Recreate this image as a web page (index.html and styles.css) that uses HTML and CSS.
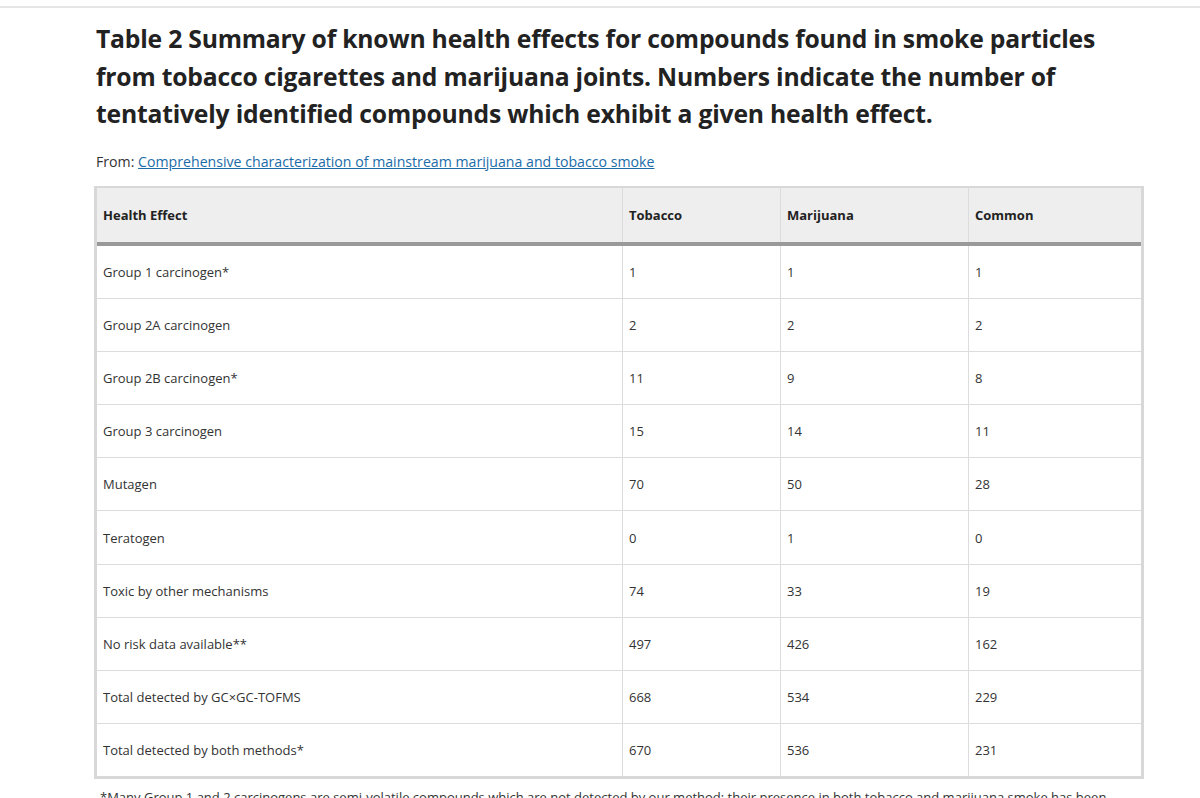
FILE: index.html
```html
<!DOCTYPE html>
<html lang="en">
<head>
<meta charset="utf-8">
<title>Table 2</title>
<link rel="stylesheet" href="styles.css">
</head>
<body>
<div class="topbar"></div>
<main class="content">
  <h1 class="title">Table 2 Summary of known health effects for compounds found in smoke particles from tobacco cigarettes and marijuana joints. Numbers indicate the number of tentatively identified compounds which exhibit a given health effect.</h1>
  <p class="from">From: <a href="#" class="src">Comprehensive characterization of mainstream marijuana and tobacco smoke</a></p>
  <div class="table-wrap">
    <table class="data">
      <thead>
        <tr><th class="c1">Health Effect</th><th class="c2">Tobacco</th><th class="c3">Marijuana</th><th class="c4">Common</th></tr>
      </thead>
      <tbody>
        <tr><td>Group 1 carcinogen*</td><td>1</td><td>1</td><td>1</td></tr>
        <tr><td>Group 2A carcinogen</td><td>2</td><td>2</td><td>2</td></tr>
        <tr><td>Group 2B carcinogen*</td><td>11</td><td>9</td><td>8</td></tr>
        <tr><td>Group 3 carcinogen</td><td>15</td><td>14</td><td>11</td></tr>
        <tr><td>Mutagen</td><td>70</td><td>50</td><td>28</td></tr>
        <tr><td>Teratogen</td><td>0</td><td>1</td><td>0</td></tr>
        <tr><td>Toxic by other mechanisms</td><td>74</td><td>33</td><td>19</td></tr>
        <tr><td>No risk data available**</td><td>497</td><td>426</td><td>162</td></tr>
        <tr><td>Total detected by GC×GC-TOFMS</td><td>668</td><td>534</td><td>229</td></tr>
        <tr><td>Total detected by both methods*</td><td>670</td><td>536</td><td>231</td></tr>
      </tbody>
    </table>
  </div>
  <p class="note">*Many Group 1 and 2 carcinogens are semi-volatile compounds which are not detected by our method; their presence in both tobacco and marijuana smoke has been reported elsewhere.</p>
</main>
</body>
</html>
```
FILE: styles.css
```css
html, body {
  margin: 0;
  padding: 0;
  background: #fff;
}
body {
  font-family: "Open Sans", "Noto Sans", Arial, sans-serif;
  color: #222;
  overflow: hidden;
  height: 798px;
}
.topbar {
  height: 6px;
  border-bottom: 2px solid #e6e6e6;
}
.content {
  padding-left: 94px;
  width: 1050px;
}
.title {
  margin: 12px 0 0 2px;
  width: 1030px;
  font-size: 24.7px;
  line-height: 37.5px;
  font-weight: 700;
  color: #222;
  letter-spacing: -0.2px;
}
.from {
  margin: 19px 0 0 2px;
  font-size: 14.15px;
  line-height: 20px;
  color: #333;
}
.src {
  color: #1b6ca8;
  text-decoration: underline;
}
.table-wrap {
  margin-top: 14px;
  border: 3px solid #d8d8d8;
  border-top-width: 2px;
}
.data {
  width: 100%;
  border-collapse: collapse;
  font-size: 13px;
  color: #333;
}
.data th {
  background: #eeeeee;
  text-align: left;
  font-weight: 700;
  color: #222;
  height: 54px;
  padding: 0 6px;
  border-left: 1px solid #dcdcdc;
  border-bottom: 4px solid #999;
}
.data td {
  height: 52.2px;
  padding: 0 6px;
  border-left: 1px solid #dcdcdc;
  border-top: 1px solid #dcdcdc;
}
.data tr > :first-child {
  border-left: none;
}
.data tbody tr:first-child td {
  border-top: none;
}
.c1 { width: 513px; }
.c2 { width: 145px; }
.c3 { width: 175px; }
.note {
  margin: 8px 0 0 6px;
  font-size: 13px;
  line-height: 20px;
  color: #333;
}
```
